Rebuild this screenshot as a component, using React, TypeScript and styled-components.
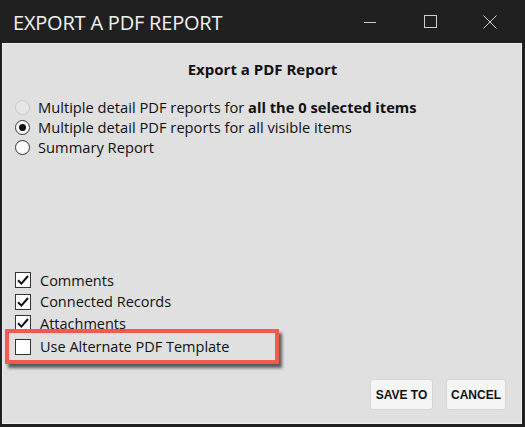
import React from "react";
import styled, { createGlobalStyle } from "styled-components";

const Global = createGlobalStyle`
  html, body { margin: 0; padding: 0; background: #202020; }
  body { font-family: "Open Sans", "Noto Sans", sans-serif; }
`;

const Window = styled.div`
  width: 525px;
  height: 427px;
  background: #202020;
  display: flex;
  flex-direction: column;
  box-sizing: border-box;
  padding: 0 3px 3px 2px;
`;

const TitleBar = styled.div`
  height: 43px;
  display: flex;
  align-items: center;
  padding-left: 11px;
  color: #f2f2f2;
`;

const Title = styled.div`
  font-family: "Open Sans", sans-serif;
  font-weight: 400;
  font-size: 20px;
  letter-spacing: -0.2px;
  flex: 1;
  margin-top: 2px;
`;

const Controls = styled.div`
  display: flex;
  align-items: center;
  height: 100%;
  margin-right: 2px;
`;

const ControlButton = styled.div`
  width: 60px;
  height: 100%;
  display: flex;
  align-items: center;
  justify-content: center;
  color: #cfcfcf;
`;

const Body = styled.div`
  flex: 1;
  background: #e0e0e0;
  border: 1px solid #f0f0f0;
  border-color: #ececec #f2f2f2 #f0f0f0 #ececec;
  display: flex;
  flex-direction: column;
  padding: 15px 15px 14px 12px;
  box-sizing: border-box;
  color: #111;
  font-size: 14px;
`;

const Heading = styled.div`
  text-align: center;
  font-weight: 700;
  font-size: 15px;
  line-height: 20px;
  margin-left: 4px;
`;

const RadioGroup = styled.div`
  display: flex;
  flex-direction: column;
  margin-top: 18px;
  font-size: 14.7px;
`;

const OptionRow = styled.label`
  display: flex;
  align-items: center;
  height: 20px;
  gap: 8px;
  white-space: nowrap;
`;

const RadioDot = styled.span<{ $state: "disabled" | "checked" | "unchecked" }>`
  width: 15px;
  height: 15px;
  border-radius: 50%;
  box-sizing: border-box;
  flex: none;
  border: 1px solid ${(p) => (p.$state === "disabled" ? "#c8c8c8" : "#333")};
  background: ${(p) => (p.$state === "disabled" ? "#e6e6e6" : "#fff")};
  display: flex;
  align-items: center;
  justify-content: center;
  &::after {
    content: "";
    width: 7px;
    height: 7px;
    border-radius: 50%;
    background: #111;
    display: ${(p) => (p.$state === "checked" ? "block" : "none")};
  }
`;

const CheckGroup = styled.div`
  margin-top: auto;
  display: flex;
  flex-direction: column;
  gap: 4.5px;
  margin-bottom: 15px;
`;

const CheckRow = styled.label`
  display: flex;
  align-items: center;
  height: 17px;
  gap: 9px;
  white-space: nowrap;
  font-size: 14.5px;
`;

const Box = styled.span`
  width: 16px;
  height: 16px;
  box-sizing: border-box;
  border: 1px solid #333;
  background: #fff;
  flex: none;
  display: flex;
  align-items: center;
  justify-content: center;
`;

const Highlight = styled.div`
  position: relative;
  margin: -7px 0 0 -10px;
  width: 274px;
  height: 35px;
  box-sizing: border-box;
  border: 4px solid #f25a4b;
  background: #e0e0e0;
  box-shadow: 3px 4px 3px rgba(0, 0, 0, 0.6);
  display: flex;
  align-items: center;
  padding-left: 6px;
`;

const Footer = styled.div`
  display: flex;
  justify-content: flex-end;
  gap: 13px;
  margin-bottom: -1px;
`;

const Button = styled.button<{ $w: number }>`
  width: ${(p) => p.$w}px;
  height: 31px;
  background: #f5f5f5;
  border: 1px solid #d6d6d6;
  border-radius: 3px;
  font-family: "Liberation Sans", Arial, sans-serif;
  font-weight: 700;
  font-size: 12px;
  color: #111;
  padding: 0;
`;

const Check = () => (
  <svg width="14" height="14" viewBox="0 0 14 14">
    <path d="M2 7.2 L5.4 10.6 L12 3" fill="none" stroke="#111" strokeWidth="2" />
  </svg>
);

export default function App() {
  return (
    <>
      <Global />
      <Window>
        <TitleBar>
          <Title>EXPORT A PDF REPORT</Title>
          <Controls>
            <ControlButton>
              <svg width="12" height="12" viewBox="0 0 12 12">
                <path d="M0 6.5 H12" stroke="currentColor" strokeWidth="1" />
              </svg>
            </ControlButton>
            <ControlButton>
              <svg width="13" height="13" viewBox="0 0 13 13">
                <rect x="0.5" y="0.5" width="12" height="12" fill="none" stroke="currentColor" strokeWidth="1" />
              </svg>
            </ControlButton>
            <ControlButton>
              <svg width="14" height="14" viewBox="0 0 14 14">
                <path d="M0.5 0.5 L13.5 13.5 M13.5 0.5 L0.5 13.5" stroke="currentColor" strokeWidth="1" />
              </svg>
            </ControlButton>
          </Controls>
        </TitleBar>
        <Body>
          <Heading>Export a PDF Report</Heading>
          <RadioGroup>
            <OptionRow>
              <RadioDot $state="disabled" />
              <span>
                Multiple detail PDF reports for <b>all the 0 selected items</b>
              </span>
            </OptionRow>
            <OptionRow>
              <RadioDot $state="checked" />
              <span>Multiple detail PDF reports for all visible items</span>
            </OptionRow>
            <OptionRow>
              <RadioDot $state="unchecked" />
              <span>Summary Report</span>
            </OptionRow>
          </RadioGroup>
          <CheckGroup>
            <CheckRow>
              <Box><Check /></Box>
              <span>Comments</span>
            </CheckRow>
            <CheckRow>
              <Box><Check /></Box>
              <span>Connected Records</span>
            </CheckRow>
            <CheckRow>
              <Box><Check /></Box>
              <span>Attachments</span>
            </CheckRow>
            <Highlight>
              <CheckRow>
                <Box />
                <span>Use Alternate PDF Template</span>
              </CheckRow>
            </Highlight>
          </CheckGroup>
          <Footer>
            <Button $w={63}>SAVE TO</Button>
            <Button $w={60}>CANCEL</Button>
          </Footer>
        </Body>
      </Window>
    </>
  );
}
